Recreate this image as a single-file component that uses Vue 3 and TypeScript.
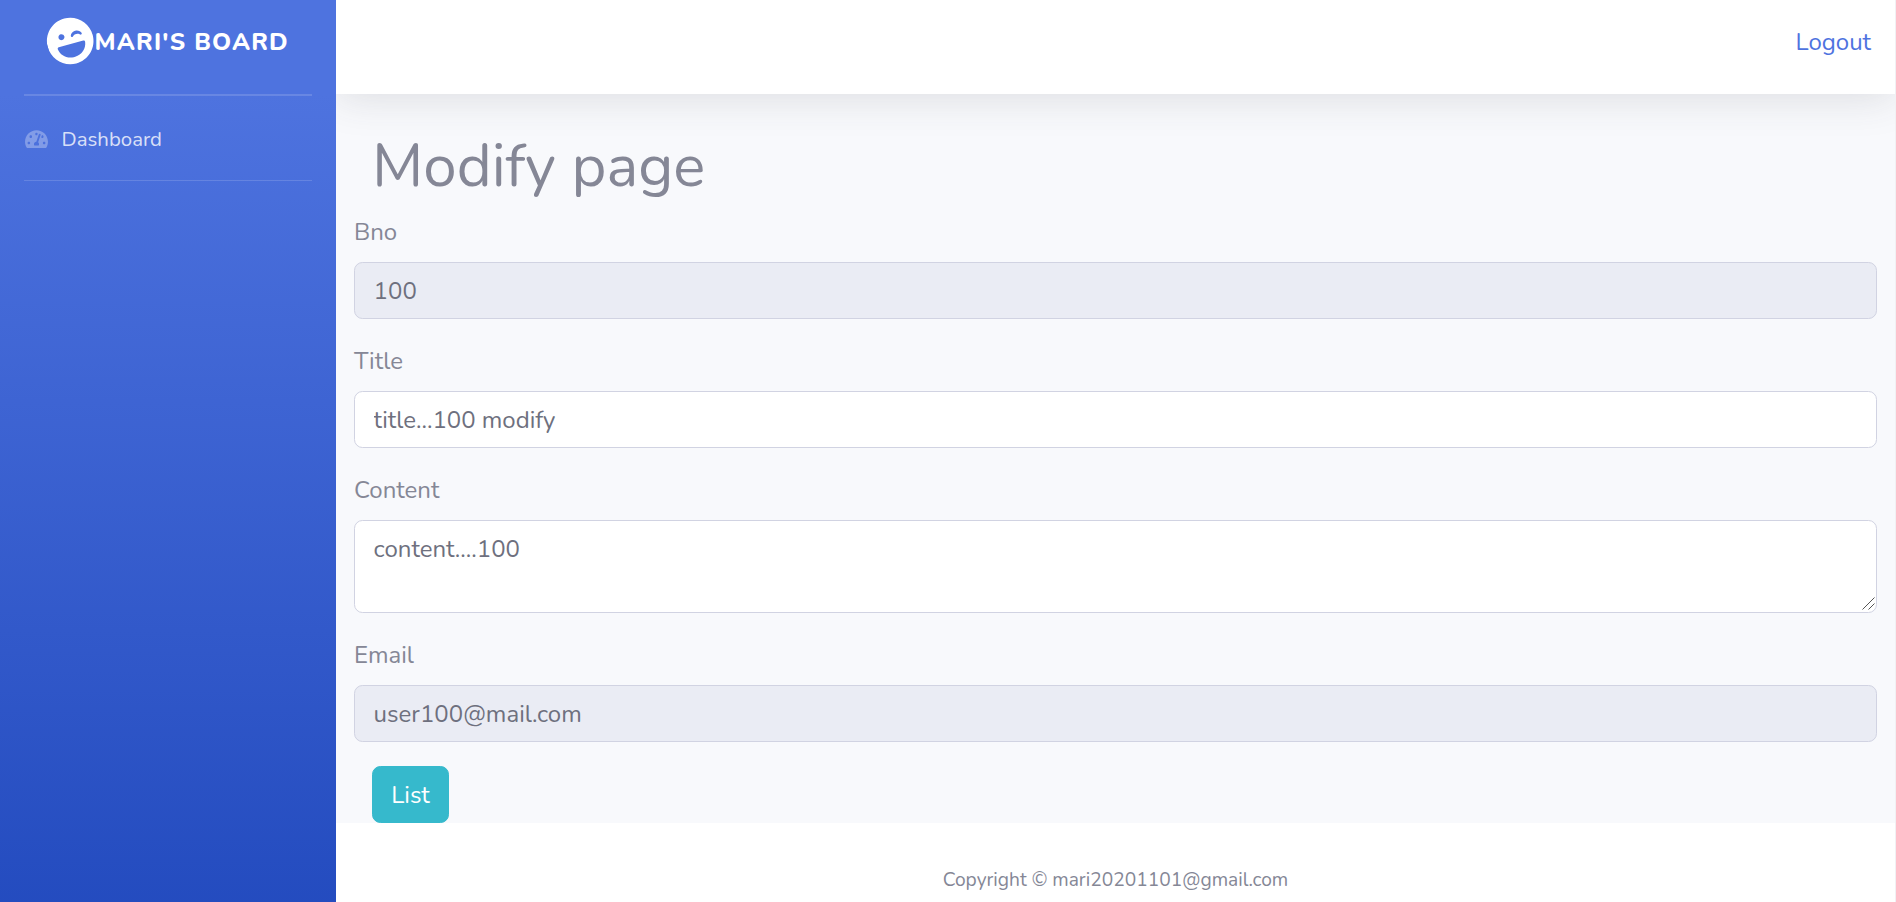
<script setup lang="ts">
import { ref } from 'vue'

interface Field {
  id: string
  label: string
  value: string
  readonly: boolean
  multiline?: boolean
}

const fields = ref<Field[]>([
  { id: 'bno', label: 'Bno', value: '100', readonly: true },
  { id: 'title', label: 'Title', value: 'title...100 modify', readonly: false },
  { id: 'content', label: 'Content', value: 'content....100', readonly: false, multiline: true },
  { id: 'email', label: 'Email', value: 'user100@mail.com', readonly: true },
])
</script>

<template>
  <div class="wrapper">
    <aside class="sidebar">
      <a class="brand">
        <svg class="brand-icon" viewBox="0 0 496 512" aria-hidden="true">
          <path d="M248 8C111 8 0 119 0 256s111 248 248 248 248-111 248-248S385 8 248 8zm20.1 198.1c4-25.2 34.2-42.1 59.9-42.1s55.9 16.9 59.9 42.1c1.7 11.1-11.4 18.3-19.8 10.8l-9.5-8.5c-14.8-13.2-46.2-13.2-61 0L288 217c-8.4 7.4-21.6.3-19.9-10.9zM168 160c17.7 0 32 14.3 32 32s-14.3 32-32 32-32-14.3-32-32 14.3-32 32-32zm88 272h-16c-73.4 0-134-55-142.9-126-1.2-9.5 6.3-18 15.9-18h270c9.6 0 17.1 8.4 15.9 18-8.9 71-69.5 126-142.9 126z" />
        </svg>
        <span class="brand-text">MARI'S BOARD</span>
      </a>
      <hr class="divider divider-top" />
      <a class="nav-link">
        <svg class="nav-icon" viewBox="0 0 576 512" aria-hidden="true">
          <path d="M288 32C128.94 32 0 160.94 0 320c0 52.8 14.25 102.26 39.06 144.8 5.61 9.62 16.3 15.2 27.44 15.2h443c11.14 0 21.83-5.58 27.44-15.2C561.75 422.26 576 372.8 576 320c0-159.06-128.94-288-288-288zm0 64c14.71 0 26.58 10.13 30.32 23.65-1.11 2.26-2.64 4.23-3.45 6.67l-9.22 27.67c-5.13 3.49-10.97 6.01-17.64 6.01-17.67 0-32-14.33-32-32S270.33 96 288 96zM96 384c-17.67 0-32-14.33-32-32s14.33-32 32-32 32 14.33 32 32-14.33 32-32 32zm48-160c-17.67 0-32-14.33-32-32s14.33-32 32-32 32 14.33 32 32-14.33 32-32 32zm246.77-72.41l-61.33 184C343.13 347.33 352 364.54 352 384c0 11.72-3.38 22.55-8.88 32H232.88c-5.5-9.45-8.88-20.28-8.88-32 0-33.94 26.5-61.43 59.9-63.59l61.34-184.01c4.17-12.56 17.73-19.45 30.36-15.17 12.57 4.19 19.35 17.79 15.17 30.36zm14.66 57.2l15.52-46.55c3.47-1.29 7.13-2.23 11.05-2.23 17.67 0 32 14.33 32 32s-14.33 32-32 32c-11.38-.01-20.89-6.28-26.57-15.22zM480 384c-17.67 0-32-14.33-32-32s14.33-32 32-32 32 14.33 32 32-14.33 32-32 32z" />
        </svg>
        <span>Dashboard</span>
      </a>
      <hr class="divider" />
    </aside>

    <div class="content-wrapper">
      <nav class="topbar"><a class="logout">Logout</a></nav>
      <main class="content">
        <h1 class="heading">Modify page</h1>
        <div v-for="field in fields" :key="field.id" class="form-group">
          <label :for="field.id">{{ field.label }}</label>
          <div v-if="field.multiline" class="textarea-box">
            <textarea :id="field.id" v-model="field.value" class="form-control"></textarea>
            <svg class="grip" viewBox="0 0 13 13" aria-hidden="true">
              <path d="M0.5 12.5L12.5 0.5M6.5 12.5L12.5 6.5" />
            </svg>
          </div>
          <input v-else :id="field.id" v-model="field.value" class="form-control" type="text" :readonly="field.readonly" />
        </div>
        <button class="btn" type="button">List</button>
      </main>
      <footer class="footer">Copyright © mari20201101@gmail.com</footer>
    </div>
  </div>
</template>

<style>
body {
  overflow: hidden;
}
</style>

<style scoped>
.wrapper {
  display: flex;
  height: 902px;
  overflow: hidden;
  box-sizing: border-box;
  border-right: 1px solid #f1f1f4;
  font-family: Nunito, "Nunito Sans", Lato, "Open Sans", sans-serif;
  font-size: 24px;
  line-height: 36px;
  color: #858796;
  background: #fff;
}
.wrapper * {
  box-sizing: border-box;
}
.sidebar {
  position: relative;
  z-index: 1;
  flex: none;
  width: 336px;
  height: 938px;
  background: #4e73df linear-gradient(180deg, #4e73df 10%, #224abe 100%);
}
.brand {
  display: flex;
  align-items: center;
  justify-content: center;
  height: 94px;
  padding-bottom: 13px;
  color: #fff;
  font-weight: 800;
  letter-spacing: 1.2px;
}
.brand-icon {
  width: 46.5px;
  height: 48px;
  margin-right: 1px;
  fill: #fff;
  transform: rotate(-15deg);
}
.brand-text {
  padding-top: 3px;
}
.divider {
  height: 1px;
  margin: 0 24px;
  border: 0;
  background: rgba(255, 255, 255, 0.15);
}
.divider-top {
  height: 2px;
}
.nav-link {
  display: flex;
  align-items: center;
  height: 84px;
  padding: 2px 24px 0;
  gap: 13.6px;
  font-size: 20.4px;
  color: rgba(255, 255, 255, 0.8);
}
.nav-link span {
  padding-bottom: 1px;
}
.nav-icon {
  width: 23px;
  height: 20.4px;
  margin-left: 1px;
  fill: rgba(255, 255, 255, 0.3);
}
.content-wrapper {
  flex: 1;
  min-width: 0;
}
.topbar {
  position: relative;
  display: flex;
  justify-content: flex-end;
  height: 94px;
  padding: 24px 24px 0;
  background: #fff;
  box-shadow: 0 3.6px 42px 0 rgba(58, 59, 69, 0.15);
}
.logout {
  color: #4e73df;
}
.content {
  height: 729px;
  padding: 36px 18px 0;
  background: #f8f9fc;
}
.heading {
  margin: 0 18px 12px;
  font-size: 60px;
  font-weight: 400;
  line-height: 72px;
}
.form-group {
  margin-bottom: 24px;
}
.form-group label {
  display: block;
  margin-bottom: 12px;
}
.form-control {
  display: block;
  width: 100%;
  height: 57px;
  margin: 0;
  padding: 9px 18.6px;
  border: 1px solid #d1d3e2;
  border-radius: 8.4px;
  outline: 0;
  font: inherit;
  color: #6e707e;
  background: #fff;
}
.form-control:read-only {
  background: #eaecf4;
}
.textarea-box {
  position: relative;
}
textarea.form-control {
  height: 93px;
  padding-top: 10px;
  resize: none;
  overflow: hidden;
}
.grip {
  position: absolute;
  right: 2px;
  bottom: 3px;
  width: 13px;
  height: 13px;
  fill: none;
  stroke: #555;
  stroke-width: 1;
}
.btn {
  display: block;
  width: 77px;
  height: 57px;
  margin: 0 18px;
  padding: 9px 0;
  border: 1px solid #36b9cc;
  border-radius: 8.4px;
  font: inherit;
  color: #fff;
  background: #36b9cc;
}
.footer {
  padding-top: 48px;
  font-size: 19.2px;
  line-height: 19.2px;
  text-align: center;
}
</style>
